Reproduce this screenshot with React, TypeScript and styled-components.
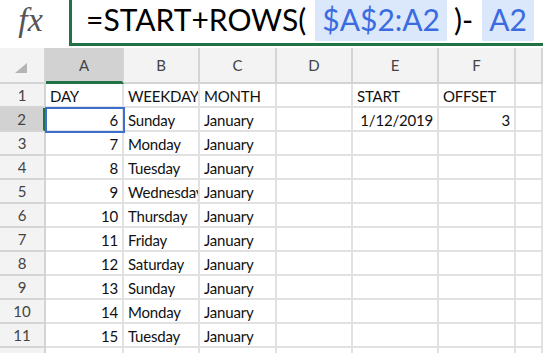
import React from 'react';
import styled, { createGlobalStyle, css } from 'styled-components';

const GlobalStyle = createGlobalStyle`
    html, body {
        margin: 0;
        padding: 0;
        background: #ffffff;
        overflow: hidden;
    }
`;

const EXCEL_GREEN = '#217346';
const GRID_LINE = '#e1e1e1';
const HEAD_LINE = '#d4d4d4';

const Page = styled.div`
    width: 543px;
    height: 353px;
    overflow: hidden;
    font-family: Lato, "Open Sans", sans-serif;
`;

const FormulaBar = styled.div`
    display: flex;
    height: 48px;
    background: #ffffff;
`;

const FxLabel = styled.div`
    width: 69px;
    display: flex;
    align-items: center;
    justify-content: center;
    padding: 0 8px 8px 0;
    box-sizing: border-box;
    font-family: "Liberation Serif", "DejaVu Serif", serif;
    font-style: italic;
    font-size: 34px;
    color: #555555;
`;

const FormulaBox = styled.div`
    flex: 1;
    height: 46px;
    box-sizing: border-box;
    border-left: 3px solid ${EXCEL_GREEN};
    border-bottom: 3px solid ${EXCEL_GREEN};
    display: flex;
    align-items: flex-start;
    padding-left: 14px;
    white-space: nowrap;
    font-size: 30px;
    color: #000000;
    overflow: hidden;
`;

const Token = styled.span<{ $ref?: boolean }>`
    display: inline-flex;
    align-items: center;
    height: 41px;
    padding-bottom: 3px;
    box-sizing: border-box;
    ${({ $ref }) => $ref && css`
        background: #dbe7fb;
        color: #3a6be0;
        padding: 0 7px 3px 7px;
        margin: 0 7px 0 9px;
    `}
`;

const Sheet = styled.div`
    display: grid;
    grid-template-columns: 46px 78px 76px 77px 76px 86px 77px 1fr;
    grid-auto-rows: 24px;
    grid-template-rows: 36px;
`;

const Corner = styled.div`
    background: #f3f3f3;
    border-right: 2px solid ${HEAD_LINE};
    border-bottom: 2px solid ${HEAD_LINE};
    display: flex;
    align-items: flex-end;
    justify-content: flex-start;
    padding: 0 0 9px 15px;
`;

const ColHead = styled.div<{ $active?: boolean }>`
    background: ${({ $active }) => ($active ? '#d2d2d2' : '#f3f3f3')};
    border-right: 2px solid ${HEAD_LINE};
    border-bottom: ${({ $active }) => ($active ? `3px solid ${EXCEL_GREEN}` : `2px solid ${HEAD_LINE}`)};
    display: flex;
    align-items: center;
    justify-content: center;
    font-size: 15px;
    color: #444444;
`;

const RowHead = styled.div<{ $active?: boolean }>`
    background: ${({ $active }) => ($active ? '#d2d2d2' : '#f3f3f3')};
    border-right: ${({ $active }) => ($active ? `3px solid ${EXCEL_GREEN}` : `2px solid ${HEAD_LINE}`)};
    border-bottom: 2px solid ${HEAD_LINE};
    display: flex;
    align-items: flex-end;
    justify-content: center;
    padding-bottom: 1px;
    line-height: 19px;
    font-size: 15px;
    color: #444444;
`;

const Cell = styled.div<{ $align?: 'left' | 'right'; $selected?: boolean }>`
    border-right: 2px solid ${GRID_LINE};
    border-bottom: 2px solid ${GRID_LINE};
    display: flex;
    align-items: flex-end;
    justify-content: ${({ $align }) => ($align === 'right' ? 'flex-end' : 'flex-start')};
    padding: 0 4px 0 4px;
    font-size: 15px;
    letter-spacing: -0.2px;
    line-height: 19px;
    color: #111111;
    white-space: nowrap;
    overflow: hidden;
    min-width: 0;
    ${({ $selected }) => $selected && css`
        outline: 2px solid #3d6fcf;
        outline-offset: -1px;
        position: relative;
        z-index: 1;
    `}
`;

const CornerMark = () => (
    <svg width="12" height="10" viewBox="0 0 12 10">
        <polygon points="12,0 12,10 0,10" fill="#b4b4b4" />
    </svg>
);

const columns = ['A', 'B', 'C', 'D', 'E', 'F', ''];

const days = ['Sunday', 'Monday', 'Tuesday', 'Wednesday', 'Thursday', 'Friday', 'Saturday', 'Sunday', 'Monday', 'Tuesday'];

type Row = (string | { text: string; right?: boolean })[];

const rows: Row[] = [
    ['DAY', 'WEEKDAY', 'MONTH', '', 'START', 'OFFSET', ''],
    [{ text: '6', right: true }, 'Sunday', 'January', '', { text: '1/12/2019', right: true }, { text: '3', right: true }, ''],
    ...days.slice(1).map((d, i): Row => [{ text: String(7 + i), right: true }, d, 'January', '', '', '', '']),
    ['', '', '', '', '', '', ''],
];

const App: React.FC = () => {
    return (
        <Page>
            <GlobalStyle />
            <FormulaBar>
                <FxLabel>fx</FxLabel>
                <FormulaBox>
                    <Token>=START+ROWS(</Token>
                    <Token $ref>$A$2:A2</Token>
                    <Token>)-</Token>
                    <Token $ref>A2</Token>
                </FormulaBox>
            </FormulaBar>
            <Sheet>
                <Corner><CornerMark /></Corner>
                {columns.map((c, i) => (
                    <ColHead key={i} $active={c === 'A'}>{c}</ColHead>
                ))}
                {rows.map((row, r) => (
                    <React.Fragment key={r}>
                        {/* the 12th row is cut off by the window, so its label doesn't show */}
                        <RowHead $active={r === 1}>{r < 11 ? r + 1 : ''}</RowHead>
                        {row.map((v, c) => {
                            const text = typeof v === 'string' ? v : v.text;
                            const right = typeof v !== 'string' && v.right;
                            return (
                                <Cell key={c} $align={right ? 'right' : 'left'} $selected={r === 1 && c === 0}>
                                    {text}
                                </Cell>
                            );
                        })}
                    </React.Fragment>
                ))}
            </Sheet>
        </Page>
    );
};

export default App;
